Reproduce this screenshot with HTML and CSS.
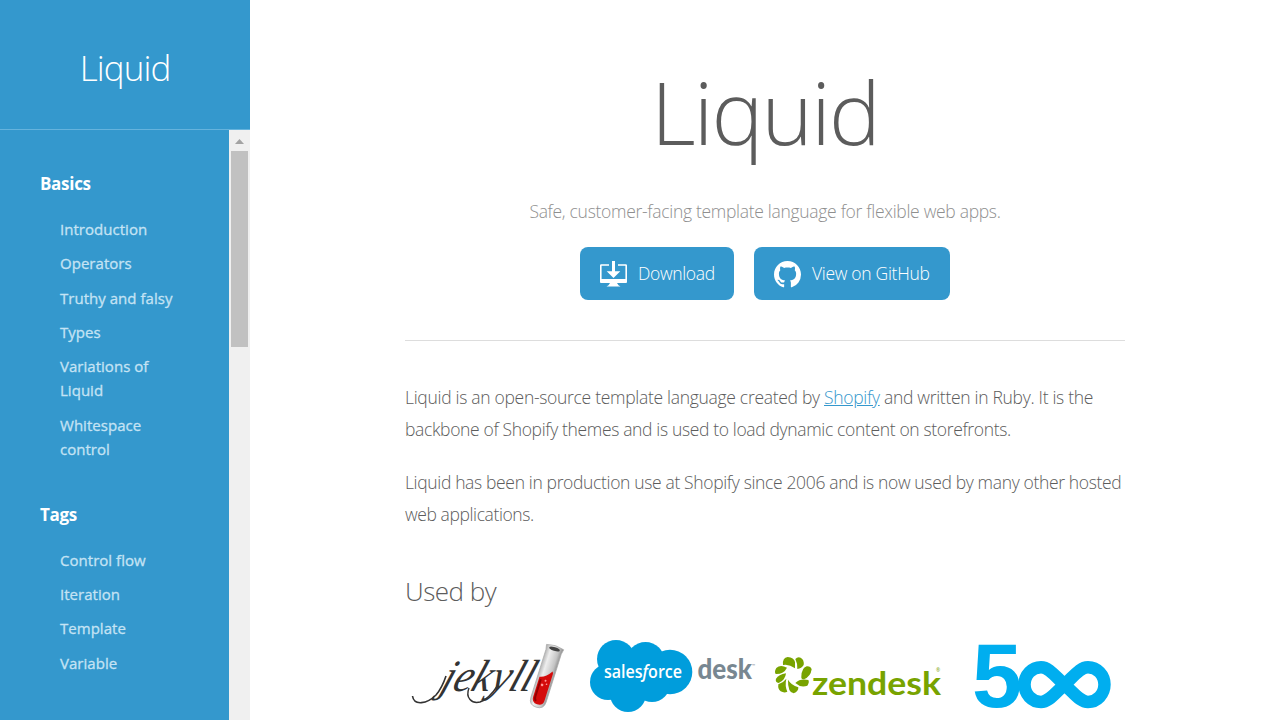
FILE: index.html
```html
<!DOCTYPE html>
<html lang="en">
<head>
<meta charset="utf-8">
<title>Liquid template language</title>
<link rel="stylesheet" href="styles.css">
</head>
<body>
<div class="page">
  <aside class="sidebar">
    <header class="sidebar-header"><a class="sidebar-logo">Liquid</a></header>
    <div class="sidebar-body">
      <nav class="sidebar-nav">
        <h3 class="section-title">Basics</h3>
        <ul class="section-links">
          <li>Introduction</li>
          <li>Operators</li>
          <li>Truthy and falsy</li>
          <li>Types</li>
          <li>Variations of<br>Liquid</li>
          <li>Whitespace<br>control</li>
        </ul>
        <h3 class="section-title">Tags</h3>
        <ul class="section-links">
          <li>Control flow</li>
          <li>Iteration</li>
          <li>Template</li>
          <li>Variable</li>
        </ul>
      </nav>
      <div class="scrollbar">
        <svg class="scroll-arrow" viewBox="0 0 21 21"><path d="M6 14 10.5 9 15 14Z" fill="#a3a3a3"/></svg>
        <div class="scroll-thumb"></div>
      </div>
    </div>
  </aside>
  <main class="content">
    <h1 class="title">Liquid</h1>
    <p class="tagline">Safe, customer-facing template language for flexible web apps.</p>
    <div class="buttons">
      <a class="button download">
        <svg class="icon" viewBox="0 0 27 27"><path d="M9 4H1.2Q.8 4 .8 4.600V20.500H26.200V4.600Q26.200 4 25.800 4H18" fill="none" stroke="#fff" stroke-width="1.600"/><path d="M0 18H27V20.800Q27 22 25.800 22H17L18.500 24.300 20.500 25.500H6.500L8.500 24.300 10 22H1.200Q0 22 0 20.800Z" fill="#fff"/><path d="M12 0h3v10.200h5.300L13.500 17 6.700 10.200H12Z" fill="#fff"/></svg>
        <span class="label">Download</span>
      </a>
      <a class="button github">
        <svg class="icon" viewBox="0 0 16 16"><path fill="#fff" d="M8 0C3.58 0 0 3.58 0 8c0 3.54 2.29 6.53 5.47 7.59.4.07.55-.17.55-.38 0-.19-.01-.82-.01-1.49-2.01.37-2.53-.49-2.69-.94-.09-.23-.48-.94-.82-1.13-.28-.15-.68-.52-.01-.53.63-.01 1.08.58 1.23.82.72 1.21 1.87.87 2.33.66.07-.52.28-.87.51-1.07-1.78-.2-3.64-.89-3.64-3.95 0-.87.31-1.59.82-2.15-.08-.2-.36-1.02.08-2.12 0 0 .67-.21 2.2.82.64-.18 1.32-.27 2-.27s1.36.09 2 .27c1.53-1.04 2.2-.82 2.2-.82.44 1.1.16 1.92.08 2.12.51.56.82 1.27.82 2.15 0 3.07-1.87 3.75-3.65 3.95.29.25.54.73.54 1.48 0 1.07-.01 1.93-.01 2.2 0 .21.15.46.55.38A8.01 8.01 0 0 0 16 8c0-4.42-3.58-8-8-8z"/></svg>
        <span class="label">View on GitHub</span>
      </a>
    </div>
    <p class="intro first"><span class="wide">Liquid is an open-source template language created by <a class="link">Shopify</a> and written in Ruby. It is the</span><br>backbone of Shopify themes and is used to load dynamic content on storefronts.</p>
    <p class="intro">Liquid has been in production use at Shopify since 2006 and is now used by many other hosted<br><span class="narrow">web applications.</span></p>
    <h2 class="subtitle">Used by</h2>
    <div class="logos">
      <svg class="logo" viewBox="400 630 180 90">
        <defs><linearGradient id="glass"><stop offset="0" stop-color="#aaa"/><stop offset=".3" stop-color="#eee"/><stop offset=".75" stop-color="#c5c5c5"/><stop offset="1" stop-color="#888"/></linearGradient></defs>
        <path d="M412.500 696C414 706 427 704 436 695Q442 688 446 676" fill="none" stroke="#333" stroke-width="1.600"/>
        <path d="M469 688C465 698 472 704 480 702Q489 699 498 685" fill="none" stroke="#333" stroke-width="1.400"/>
        <text class="jekyll" transform="translate(439 691) skewX(-20)" textLength="91" lengthAdjust="spacingAndGlyphs">jekyll</text>
        <g transform="translate(554.500 649) rotate(17.500)">
          <path d="M-9 -2Q0 -5 9 -2L8 3V53Q8 61 0 61T-8 53V3Z" fill="url(#glass)" stroke="#aaa" stroke-width=".7"/>
          <path d="M-6 31Q0 30 5 22L6 24V52Q6 58 0 58T-6 52Z" fill="#d40b0b"/>
          <path d="M-4 33V51Q-4 54-2 55" fill="none" stroke="#940000" stroke-width="2"/>
          <ellipse cx="0" cy="0" rx="5.500" ry="1.900" fill="#444"/>
          <g fill="#f99"><circle cx="1" cy="33" r="1"/><circle cx="-1" cy="38" r="1.300"/><circle cx="3" cy="36" r=".8"/></g>
        </g>
      </svg>
      <svg class="logo" viewBox="580 630 180 90">
        <g fill="#009ddc"><circle cx="616" cy="659" r="19"/><circle cx="645.500" cy="661" r="19"/><circle cx="670" cy="672" r="22.300"/><circle cx="608" cy="682" r="18"/><circle cx="628" cy="694" r="18"/><circle cx="652" cy="684" r="18"/><rect x="607" y="655" width="58" height="36"/></g>
        <text class="salesforce" x="604" y="678" textLength="78" lengthAdjust="spacingAndGlyphs">sales<tspan font-style="italic">f</tspan>orce</text>
        <text class="desk" x="697.500" y="679" textLength="54.500" lengthAdjust="spacingAndGlyphs">desk</text>
        <text class="tm" x="752" y="667">™</text>
      </svg>
      <svg class="logo" viewBox="765 630 180 90">
        <g fill="#78a300" transform="translate(765 630) scale(.33333)">
          <path d="M54 105Q52 82 68 81Q87 82 90 96V115Q72 101 54 105Z"/>
          <path d="M91 87Q98 79 107 83Q118 89 116 105Q110 115 97 117Q98 101 91 87Z"/>
          <path d="M109 140Q110 113 125 109Q137 108 140 118Q137 140 117 148Q108 148 109 140Z"/>
          <path d="M91 159Q105 145 130 150Q134 157 127 167Q107 174 91 159Z"/>
          <path d="M69 149Q78 165 100 172Q101 184 86 190Q68 187 69 149Z"/>
          <path d="M64 146Q59 167 67 185Q58 190 47 184Q38 178 40 163Q54 159 64 146Z"/>
          <path d="M63 130Q61 151 41 159Q30 157 33 146Q41 134 63 130Z"/>
          <path d="M66 113Q56 133 32 132Q27 124 34 114Q46 102 66 113Z"/>
        </g>
        <text class="zendesk" x="812" y="694.500" textLength="129" lengthAdjust="spacingAndGlyphs">zendesk</text>
        <text class="registered" x="936" y="672">®</text>
      </svg>
      <svg class="logo" viewBox="960 630 180 90">
        <text class="five" x="972" y="707.300" textLength="50" lengthAdjust="spacingAndGlyphs">5</text>
        <path d="M1064.500 684.700C1055 676 1049 667.200 1041 667.200A16.500 17.400 0 0 0 1041 702C1049 702 1055 693 1064.500 684.700C1074 676 1080 667.200 1088 667.200A16.500 17.400 0 0 1 1088 702C1080 702 1074 693 1064.500 684.700Z" fill="none" stroke="#00aeef" stroke-width="12.500"/>
      </svg>
    </div>
  </main>
</div>
</body>
</html>
```
FILE: styles.css
```css
* { box-sizing: border-box; }
body { margin: 0; height: 720px; overflow: hidden; background: #fff; color: #5c5c5c; font: 300 17.5px/32px "Open Sans", sans-serif; }
h1, h2, h3, p, ul { margin: 0; padding: 0; font-weight: 300; }
.page { display: flex; height: 720px; overflow: hidden; }
.sidebar { width: 250px; flex: none; display: flex; flex-direction: column; background: #3498cd; color: #fff; }
.sidebar-header { height: 130px; flex: none; border-bottom: 1px solid #65b3dd; text-align: center; padding-top: 44px; }
.sidebar-logo { font-size: 35px; line-height: 48px; letter-spacing: -0.9px; }
.sidebar-body { flex: 1; min-height: 0; display: flex; justify-content: space-between; }
.sidebar-nav { padding: 41px 0 0 40px; }
.section-title { font-size: 17px; line-height: 26px; font-weight: 700; letter-spacing: -0.3px; margin-bottom: 20px; }
.section-links { list-style: none; padding-left: 20px; margin-bottom: 41px; color: #c5e3f4; font: 400 15px/24px "Open Sans", sans-serif; letter-spacing: 0.03px; -webkit-text-stroke: 0.3px #c5e3f4; }
.section-links li { margin-bottom: 10.35px; }
.scrollbar { width: 21px; background: #f0f0f0; }
.scroll-arrow { display: block; width: 21px; height: 21px; }
.scroll-thumb { width: 17px; height: 196px; margin-left: 2px; background: #c1c1c1; }
.content { width: 720px; margin: 0 auto; padding-top: 51px; }
.title { font-size: 87px; line-height: 120px; text-align: center; letter-spacing: -1.8px; }
.tagline { margin-top: 24px; text-align: center; color: #8f8f8f; letter-spacing: -0.3px; }
.buttons { display: flex; justify-content: center; gap: 20px; padding: 20px 0 40px; border-bottom: 1px solid #ddd; }
.button { display: flex; align-items: center; gap: 11px; height: 53px; padding: 0 20px; border-radius: 8px; background: #3498cd; color: #fff; white-space: nowrap; }
.download { width: 154px; letter-spacing: -0.35px; }
.github { width: 196px; letter-spacing: -0.3px; }
.label { padding-bottom: 2px; }
.icon { width: 27px; height: 27px; flex: none; margin-top: 2px; }
.intro { margin-bottom: 21px; white-space: nowrap; letter-spacing: -0.35px; }
.wide { letter-spacing: -0.3px; }
.narrow { letter-spacing: -0.4px; }
.first { margin-top: 40px; }
.link { color: #3498cd; text-decoration: underline; }
.subtitle { margin-top: 41px; font-size: 26px; line-height: 40px; letter-spacing: -0.5px; }
.logos { display: grid; grid-template-columns: 180px 185px 195px 180px; margin: 19px 0 0 -5px; }
.logo { display: block; width: 180px; height: 90px; overflow: visible; }
.jekyll { font: italic 45px "Liberation Serif", serif; fill: #333; }
.salesforce { font: 600 18px "Open Sans", sans-serif; fill: #fff; }
.desk { font: 900 29px Lato, sans-serif; fill: #788791; }
.tm { font: 4px "Open Sans", sans-serif; fill: #788791; }
.zendesk { font: 700 33px Lato, sans-serif; fill: #78a300; }
.registered { font: 5px "Open Sans", sans-serif; fill: #78a300; }
.five { font: bold 91px "Liberation Sans", sans-serif; fill: #00aeef; }
```
